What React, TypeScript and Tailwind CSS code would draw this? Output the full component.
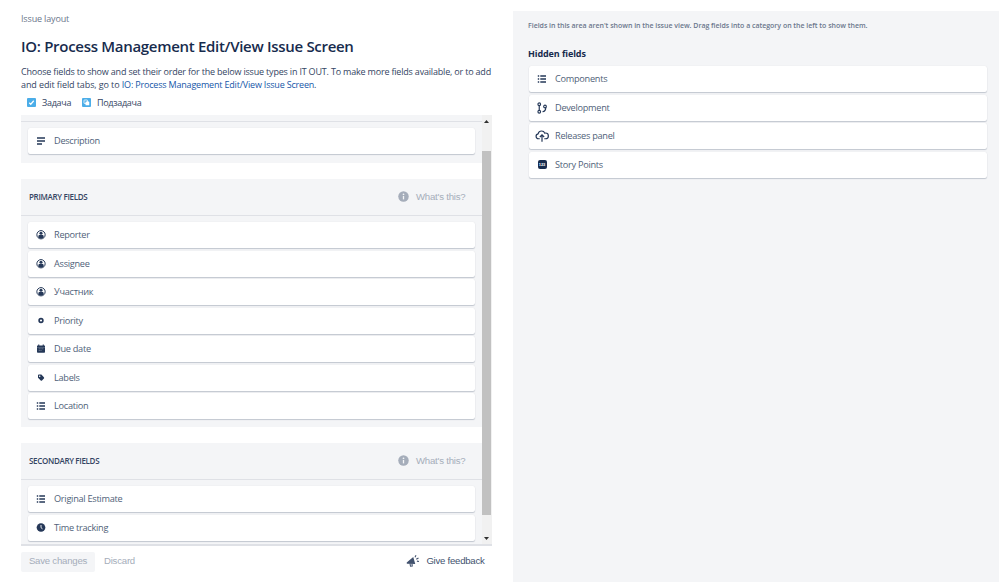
import type { ReactNode } from "react";

const UI = "font-['Open_Sans','Noto_Sans',sans-serif]";
const ARIAL = "font-['Liberation_Sans',Arial,sans-serif]";

function Svg({ size, box = 24, children }: { size: number; box?: number; children: ReactNode }) {
  return (
    <svg width={size} height={size} viewBox={`0 0 ${box} ${box}`} fill="none" aria-hidden="true" className="shrink-0">
      {children}
    </svg>
  );
}

const DescriptionIcon = () => (
  <Svg size={10} box={10}>
    <path d="M1 2h8M1 5h8M1 8h5" stroke="currentColor" strokeWidth="1.5" />
  </Svg>
);

const ListIcon = () => (
  <Svg size={10} box={10}>
    <path d="M.8 2h1.4M.8 5h1.4M.8 8h1.4M3.3 2H9M3.3 5H9M3.3 8H9" stroke="currentColor" strokeWidth="1.3" />
  </Svg>
);

const PersonIcon = () => (
  <Svg size={10} box={20}>
    <circle cx="10" cy="9.5" r="8.3" stroke="currentColor" strokeWidth="2" />
    <circle cx="10" cy="6.5" r="3.1" fill="currentColor" />
    <path d="M4.8 15v-2.5c0-1.4 1.1-2.3 2.4-2.3h5.6c1.3 0 2.4.9 2.4 2.3V15A8 8 0 0 1 10 17a8 8 0 0 1-5.2-2z" fill="currentColor" />
  </Svg>
);

const PriorityIcon = () => (
  <Svg size={10} box={10}>
    <circle cx="5" cy="4.5" r="1.9" stroke="currentColor" strokeWidth="1.6" />
  </Svg>
);

const CalendarIcon = () => (
  <Svg size={10} box={20}>
    <path d="M3 3h14a1 1 0 0 1 1 1v2.5H2V4a1 1 0 0 1 1-1z" fill="currentColor" />
    <path d="M2 6.5h16V16a1.500 1.500 0 0 1-1.500 1.500h-13A1.500 1.500 0 0 1 2 16z" fill="currentColor" />
    <path d="M5.5 1v4M14.5 1v4" stroke="currentColor" strokeWidth="2.2" />
    <path d="M5.5 9.5h2M9 9.5h2M12.5 9.5h2M5.5 13h2M9 13h2" stroke="#fff" strokeOpacity=".45" strokeWidth="1.6" />
  </Svg>
);

const TagIcon = () => (
  <Svg size={10} box={10}>
    <path
      d="M2 2.3c0-.5.4-.8.8-.8h2.1c.3 0 .5.1.7.3l2.3 2.4c.4.4.4.9 0 1.3L6 7.5c-.4.4-.9.4-1.3 0L2.3 5.1A1 1 0 0 1 2 4.4zM3.7 2.5a.75.75 0 1 0 0 1.5.75.75 0 0 0 0-1.5z"
      fill="currentColor"
      fillRule="evenodd"
    />
  </Svg>
);

const ClockIcon = () => (
  <Svg size={10} box={20}>
    <circle cx="10" cy="9" r="8.7" fill="currentColor" />
    <path d="M10 4v5.3l3 2.4" stroke="#fff" strokeWidth="1.8" />
  </Svg>
);

const BranchIcon = () => (
  <Svg size={12} box={24}>
    <circle cx="6.5" cy="4.5" r="2.7" stroke="currentColor" strokeWidth="2.2" />
    <circle cx="6.5" cy="19.5" r="2.7" stroke="currentColor" strokeWidth="2.2" />
    <circle cx="18" cy="9" r="2.7" stroke="currentColor" strokeWidth="2.2" />
    <path d="M6.5 7v10M19.5 11c0 4.5-2 8-6.5 8.5" stroke="currentColor" strokeWidth="2.4" />
  </Svg>
);

const ReleaseIcon = () => (
  <Svg size={14} box={28}>
    <path
      d="M9.5 19.5H7a5 5 0 0 1-.8-9.900C7 6.500 9.800 4 13.200 4c3 0 5.300 1.700 6.300 4.200.5-.2 1-.2 1.500-.2a5.700 5.700 0 0 1 0 11.500h-2.500"
      stroke="currentColor"
      strokeWidth="2.4"
    />
    <path d="M14 25.5V12M9.7 16l4.3-4.3 4.3 4.3" stroke="currentColor" strokeWidth="2.4" />
  </Svg>
);

const NumberIcon = () => (
  <span
    className={`flex h-[9px] w-[9px] items-center justify-center rounded-[2px] bg-[#172b4d] text-[4px] font-bold leading-none tracking-normal text-white ${ARIAL}`}
  >
    123
  </span>
);

const InfoIcon = () => (
  <Svg size={11} box={22}>
    <circle cx="11" cy="11" r="10.5" fill="currentColor" />
    <circle cx="11" cy="6.5" r="1.7" fill="#f4f5f7" />
    <path d="M11 9.8v7" stroke="#f4f5f7" strokeWidth="2.6" />
  </Svg>
);

const FeedbackIcon = () => (
  <Svg size={14} box={28}>
    <path d="M2 16.5 14.5 6l4 14-15.500-.3A1.800 1.800 0 0 1 2 16.500z" fill="currentColor" />
    <path d="m8 19 1 5.5 3.500-.5-.5-4" stroke="currentColor" strokeWidth="2.2" />
    <path d="m18 6.500 2-4M20.500 10.500 25 8M21.800 14.300l4.200.8" stroke="currentColor" strokeWidth="2.2" />
  </Svg>
);

const TaskIcon = () => (
  <Svg size={9} box={18}>
    <rect width="18" height="18" rx="2" fill="#4bade8" />
    <path d="m4.5 9.5 3 3 6-7" stroke="#fff" strokeWidth="2.4" />
  </Svg>
);

const SubtaskIcon = () => (
  <Svg size={9} box={18}>
    <rect width="18" height="18" rx="2" fill="#4bade8" />
    <rect x="4" y="4" width="7" height="7" rx="1" stroke="#fff" strokeWidth="1.6" />
    <rect x="7" y="7" width="7.5" height="7.5" rx="1" fill="#fff" />
  </Svg>
);

type Field = { label: string; icon: ReactNode };

const PRIMARY: Field[] = [
  { label: "Reporter", icon: <PersonIcon /> },
  { label: "Assignee", icon: <PersonIcon /> },
  { label: "Участник", icon: <PersonIcon /> },
  { label: "Priority", icon: <PriorityIcon /> },
  { label: "Due date", icon: <CalendarIcon /> },
  { label: "Labels", icon: <TagIcon /> },
  { label: "Location", icon: <ListIcon /> },
];

const SECONDARY: Field[] = [
  { label: "Original Estimate", icon: <ListIcon /> },
  { label: "Time tracking", icon: <ClockIcon /> },
];

const HIDDEN: Field[] = [
  { label: "Components", icon: <ListIcon /> },
  { label: "Development", icon: <BranchIcon /> },
  { label: "Releases panel", icon: <ReleaseIcon /> },
  { label: "Story Points", icon: <NumberIcon /> },
];

function FieldList({ fields }: { fields: Field[] }) {
  return (
    <ul className="flex flex-col gap-[2.5px]">
      {fields.map((field) => (
        <li
          key={field.label}
          className="flex h-[26px] shrink-0 items-center rounded-[2px] bg-white pl-[5px] text-[9.2px] tracking-[-0.28px] text-[#505f79] shadow-[0_1px_1px_rgba(9,30,66,0.2),0_0_1px_rgba(9,30,66,0.12)]"
        >
          <span className="flex w-4 justify-center text-[#253858]">{field.icon}</span>
          <span className="ml-[5px]">{field.label}</span>
        </li>
      ))}
    </ul>
  );
}

function SectionHeader({ title }: { title: string }) {
  return (
    <div className="flex h-[37px] items-center justify-between border-b border-[#dfe1e6] pr-4 pl-2">
      <h2 className="text-[8px] font-semibold tracking-[-0.32px] text-[#344563]">{title}</h2>
      <div className={`flex items-center gap-[7px] text-[9.6px] tracking-[-0.2px] text-[#a5adba] ${ARIAL}`}>
        <InfoIcon />
        <span>What's this?</span>
      </div>
    </div>
  );
}

function Scrollbar() {
  return (
    <div className="flex w-[10px] flex-col items-center bg-[#f1f1f1] pt-[5px] pb-[4px]">
      <svg width="5" height="3" viewBox="0 0 5 3">
        <path d="M0 3 2.5 0 5 3z" fill="#303030" />
      </svg>
      <div className="mt-[28px] h-[364px] w-[9px] bg-[#c1c1c1]" />
      <svg width="5" height="3" viewBox="0 0 5 3" className="mt-auto">
        <path d="M0 0 2.5 3 5 0z" fill="#303030" />
      </svg>
    </div>
  );
}

export default function App() {
  return (
    <div className={`flex h-[588px] w-[999px] overflow-hidden bg-white pl-[21px] ${UI}`}>
      <main className="flex w-[470.5px] flex-col">
        <p className="mt-3 h-[13px] text-[9px] leading-[13px] tracking-[-0.15px] text-[#6b778c]">Issue layout</p>
        <h1 className="mt-[11px] h-5 whitespace-nowrap text-[15px] leading-5 font-semibold tracking-[-0.3px] text-[#172b4d]">
          IO: Process Management Edit/View Issue Screen
        </h1>
        <div className="mt-[9px] h-[26px] whitespace-nowrap text-[9px] leading-[13px] tracking-[-0.19px] text-[#344563]">
          Choose fields to show and set their order for the below issue types in IT OUT. To make more fields available, or to add
          <br />
          <span className="tracking-[-0.1px]">and edit field tabs, go to </span>
          <a href="#screen" className="text-[#1556a8]">IO: Process Management Edit/View Issue Screen</a>.
        </div>
        <div className="mt-[5px] flex h-[13px] items-center pl-[6px] text-[9px] leading-[13px] tracking-[-0.3px] text-[#344563]">
          <TaskIcon />
          <span className="ml-[6px] w-[40px]">Задача</span>
          <SubtaskIcon />
          <span className="ml-[6px]">Подзадача</span>
        </div>

        <div className="mt-[6px] flex h-[431px] shrink-0 overflow-hidden border-b-2 border-[#dfe1e6]">
          <div className="flex w-[460.5px] flex-col">
            <section className="h-12 shrink-0 bg-[#f4f5f7]">
              <div className="h-[7px] border-b border-[#dfe1e6]" />
              <div className="px-[7px] pt-[6px]">
                <FieldList fields={[{ label: "Description", icon: <DescriptionIcon /> }]} />
              </div>
            </section>
            <section className="mt-4 h-[248px] shrink-0 bg-[#f4f5f7]">
              <SectionHeader title="PRIMARY FIELDS" />
              <div className="px-[7px] pt-[6px]">
                <FieldList fields={PRIMARY} />
              </div>
            </section>
            <section className="mt-4 h-[110px] shrink-0 bg-[#f4f5f7]">
              <SectionHeader title="SECONDARY FIELDS" />
              <div className="px-[7px] pt-[6px]">
                <FieldList fields={SECONDARY} />
              </div>
            </section>
          </div>
          <Scrollbar />
        </div>

        <footer className={`mt-[5px] flex h-5 items-center pt-px text-[9.6px] tracking-[-0.22px] ${ARIAL}`}>
          <button type="button" className="h-5 w-[74px] rounded-[2px] bg-[#f4f5f7] text-[#a5adba]">
            Save changes
          </button>
          <button type="button" className="ml-[9px] text-[#a5adba]">
            Discard
          </button>
          <button type="button" className="mr-[7px] ml-auto flex items-center gap-[6px] tracking-[-0.25px] text-[#42526e]">
            <FeedbackIcon />
            Give feedback
          </button>
        </footer>
      </main>

      <aside className="mt-[11px] ml-[21.5px] h-[571px] flex-1 bg-[#f4f5f7] pr-3 pl-4">
        <p className="mt-[9px] -ml-px h-3 whitespace-nowrap text-[7px] leading-3 font-semibold tracking-[-0.02px] text-[#6b778c]">
          Fields in this area aren't shown in the issue view. Drag fields into a category on the left to show them.
        </p>
        <h2 className="mt-[15px] mb-[6px] -ml-px h-[13px] text-[9px] leading-[13px] font-bold tracking-[-0.1px] text-[#172b4d]">
          Hidden fields
        </h2>
        <FieldList fields={HIDDEN} />
      </aside>
    </div>
  );
}
